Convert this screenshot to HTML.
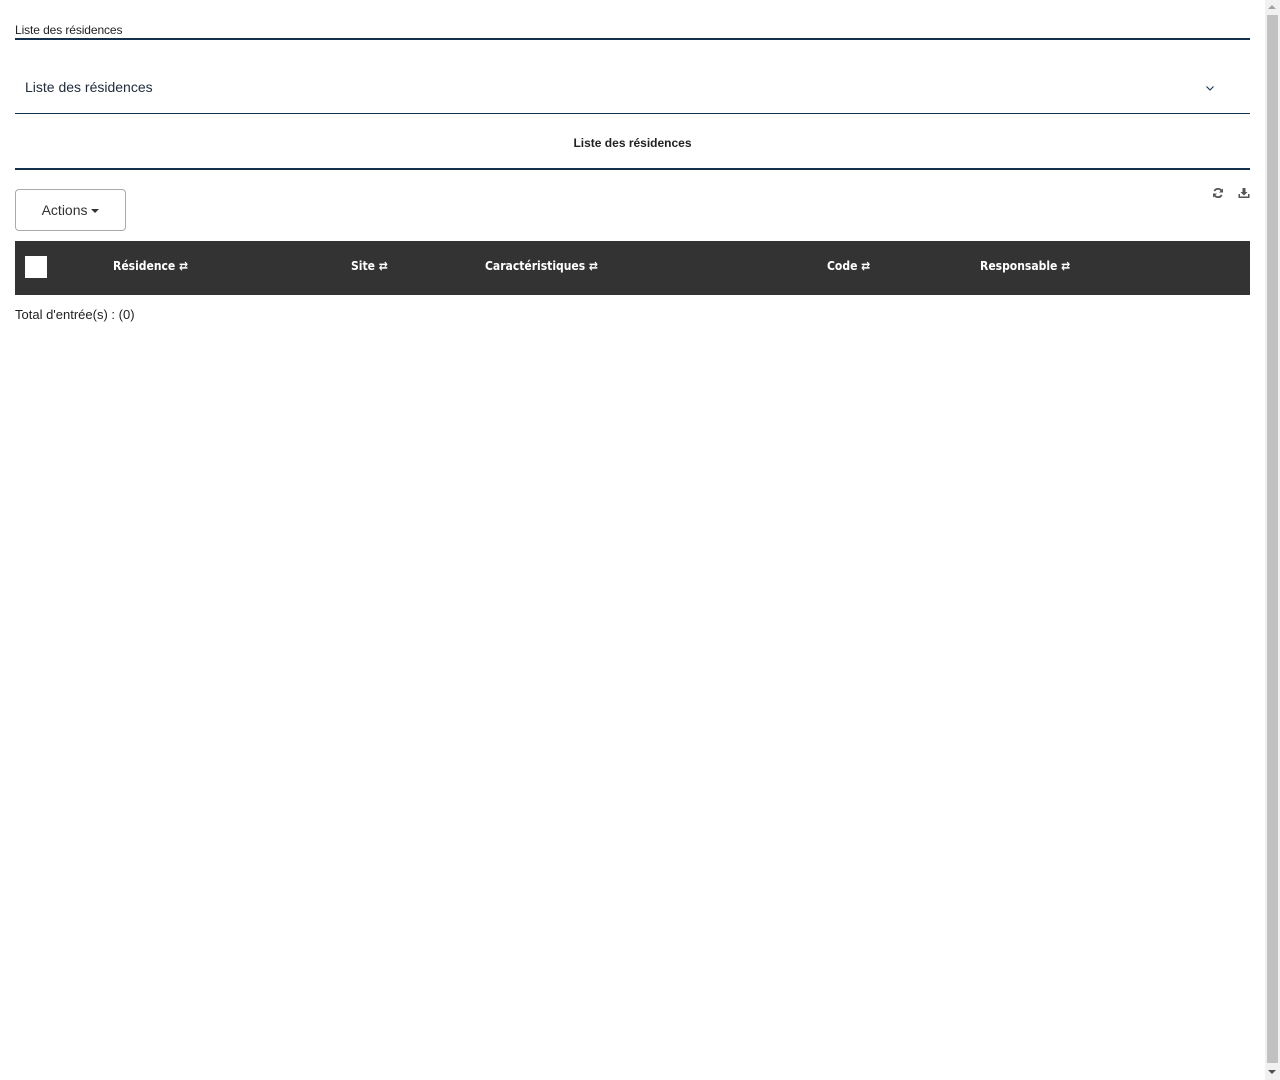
<!DOCTYPE html>
<html><head><meta charset="utf-8"><style>
html,body{margin:0;padding:0;}
body{width:1280px;height:1080px;overflow:hidden;font-family:"Liberation Sans",sans-serif;color:#333;position:relative;background:#fff;}
.abs{position:absolute;}
.sb{position:absolute;left:1265px;top:0;width:15px;height:1080px;background:#f1f1f1;}
.thumb{position:absolute;left:2px;top:15px;width:11px;height:1048px;background:#c1c1c1;}
</style></head><body>
<div class="abs" style="left:15px;top:23px;font-size:12px;color:#222;letter-spacing:-0.1px;">Liste des résidences</div>
<div class="abs" style="left:15px;top:38px;width:1235px;height:2px;background:#13304d;"></div>
<div class="abs" style="left:25px;top:79px;font-size:14px;color:#1d2b3a;">Liste des résidences</div>
<svg class="abs" style="left:1205px;top:85px" width="10" height="7" viewBox="0 0 10 7"><path d="M1.5 1.5 L5 5 L8.5 1.5" fill="none" stroke="#13304d" stroke-width="1.1"/></svg>
<div class="abs" style="left:15px;top:113px;width:1235px;height:1px;background:#13304d;"></div>
<div class="abs" style="left:15px;top:136px;width:1235px;text-align:center;font-size:12px;font-weight:bold;color:#222;">Liste des résidences</div>
<div class="abs" style="left:15px;top:168px;width:1235px;height:2px;background:#13304d;"></div>
<div class="abs" style="left:15px;top:189px;width:109px;height:40px;border:1px solid #aaa;border-radius:4px;font-size:14px;color:#333;line-height:40px;text-align:center;">Actions <span style="display:inline-block;width:0;height:0;border-left:4px solid transparent;border-right:4px solid transparent;border-top:4px solid #333;vertical-align:middle;"></span></div>
<svg class="abs" style="left:1212px;top:187px" width="12" height="12" viewBox="0 0 12 12"><path d="M10 4.5A4.3 4.3 0 0 0 2.3 4M2 7.5A4.3 4.3 0 0 0 9.7 8" fill="none" stroke="#555" stroke-width="1.8"/><path d="M11 1.5V5.5H7Z M1 10.5V6.5H5Z" fill="#555"/></svg>
<svg class="abs" style="left:1238px;top:187px" width="12" height="12" viewBox="0 0 12 12"><path d="M4.5 1H7.5V5H9.5L6 8.5L2.5 5H4.5Z M0.5 7H2V9.5H10V7H11.5V11H0.5Z" fill="#555"/></svg>
<div class="abs" style="left:15px;top:241px;width:1235px;height:54px;background:#333;"></div>
<div class="abs" style="left:25px;top:256px;width:22px;height:22px;background:#fff;"></div>
<div class="abs" style="top:259px;font-family:'DejaVu Sans Condensed','DejaVu Sans',sans-serif;font-stretch:condensed;font-weight:bold;font-size:12px;color:#fff;left:0;width:1280px;">
<span class="abs" style="left:113px">Résidence ⇄</span>
<span class="abs" style="left:351px">Site ⇄</span>
<span class="abs" style="left:485px">Caractéristiques ⇄</span>
<span class="abs" style="left:827px">Code ⇄</span>
<span class="abs" style="left:980px">Responsable ⇄</span>
</div>
<div class="abs" style="left:15px;top:307px;font-size:13px;color:#222;">Total d'entrée(s) : (0)</div>
<div class="sb"><div class="thumb"></div>
<div class="abs" style="left:3px;top:5px;width:0;height:0;border-left:4px solid transparent;border-right:4px solid transparent;border-bottom:4px solid #a3a3a3;"></div>
<div class="abs" style="left:3px;top:1070px;width:0;height:0;border-left:4px solid transparent;border-right:4px solid transparent;border-top:4px solid #505050;"></div>
</div>
</body></html>
